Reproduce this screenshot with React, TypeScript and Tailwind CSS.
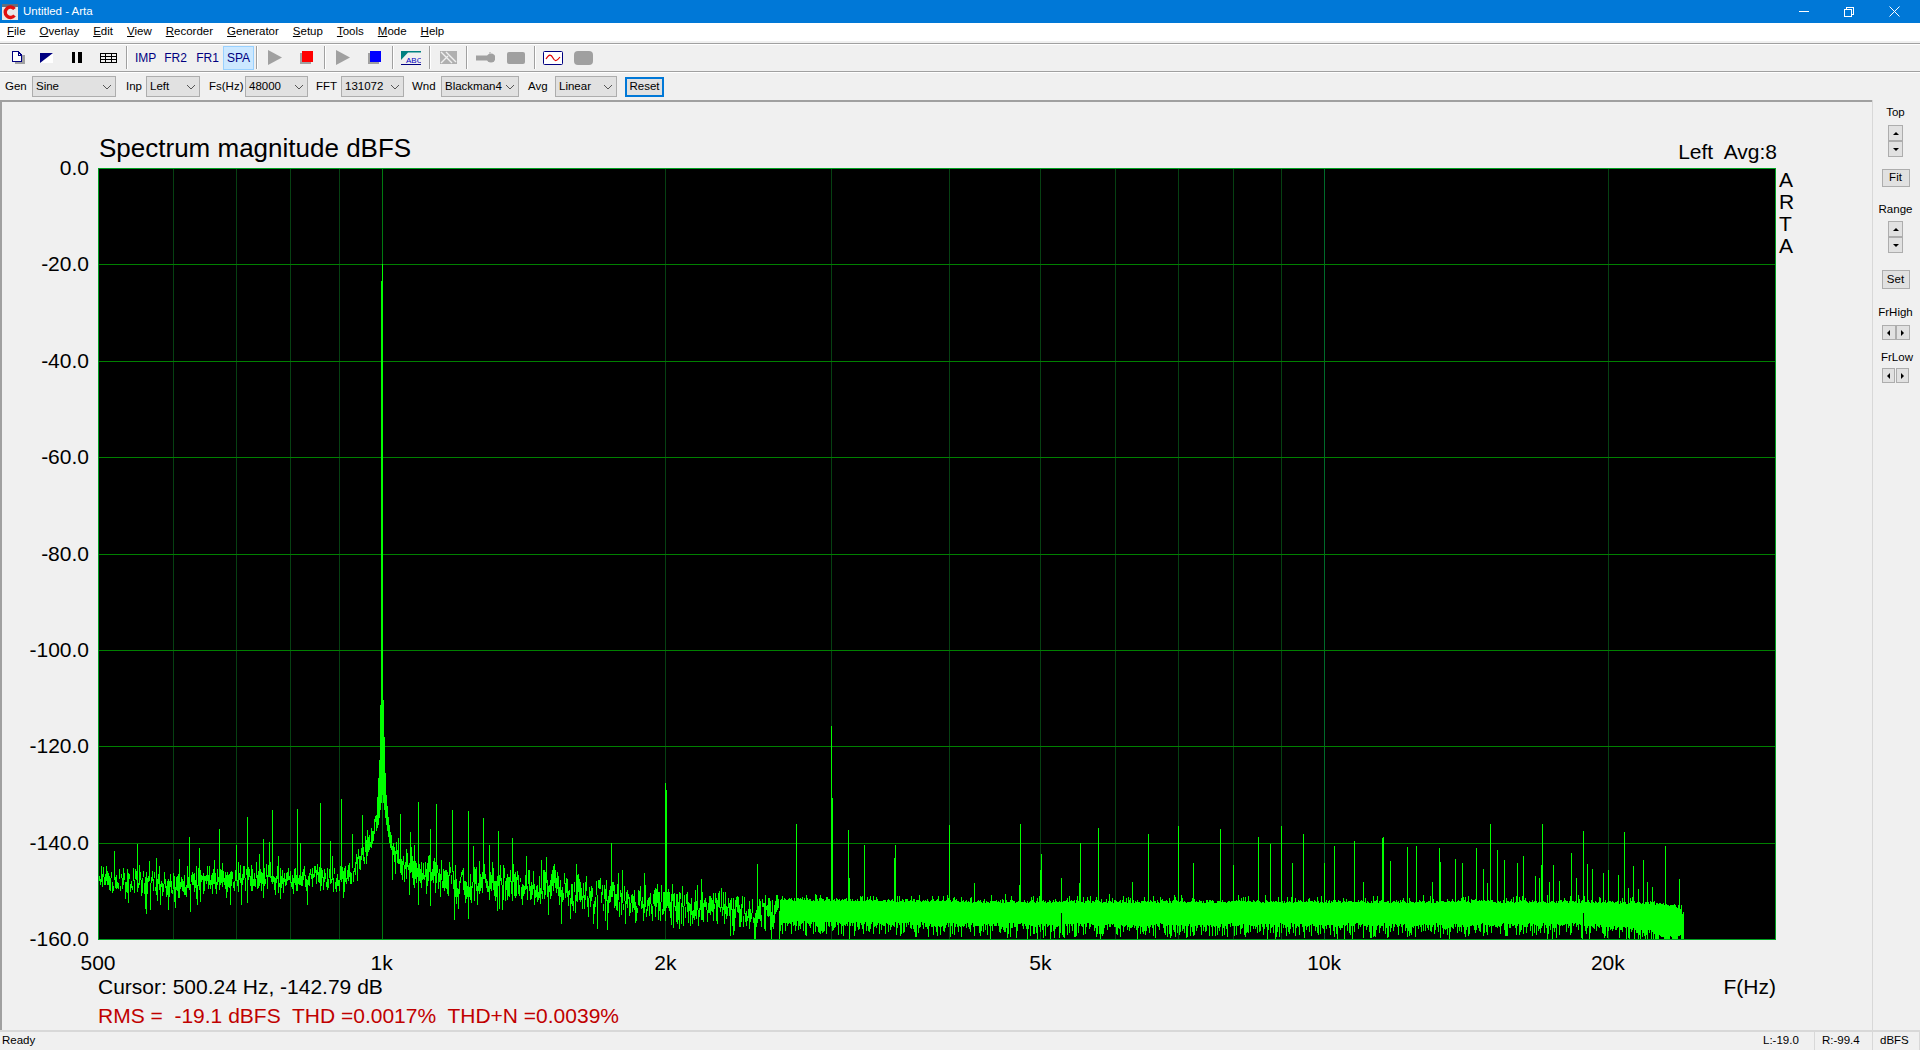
import type { ReactNode } from "react"

const UI = "font-[Liberation_Sans,Arial,sans-serif] text-[11.5px] text-black"
const PLOT = "font-[Liberation_Sans,Arial,sans-serif] text-[21px] leading-[24px] text-black"

const MENU = ["File", "Overlay", "Edit", "View", "Recorder", "Generator", "Setup", "Tools", "Mode", "Help"]
const DB_LABELS = ["0.0", "-20.0", "-40.0", "-60.0", "-80.0", "-100.0", "-120.0", "-140.0", "-160.0"]

// plot geometry in page pixels
const LEFT = 98
const RIGHT = 1775
const TOP = 168
const BOTTOM = 939
const OCTAVE = 283.7
const xOf = (f: number) => LEFT + OCTAVE * Math.log2(f / 500)

const MINOR = [600, 700, 800, 900, 2000, 3000, 4000, 5000, 6000, 7000, 8000, 9000, 20000]
const X_LABELS: [number, string][] = [
  [500, "500"],
  [1000, "1k"],
  [2000, "2k"],
  [5000, "5k"],
  [10000, "10k"],
  [20000, "20k"],
]

// upper and lower edge of the noise band, [x, y]
const TOP_EDGE = [
  [98, 872], [150, 873], [200, 875], [295, 867], [340, 866], [360, 850], [370, 838], [376, 815], [379, 760], [380, 705],
  [381, 281], [382, 264], [383, 700], [384, 737], [385, 773], [386, 795], [388, 817], [390, 832], [395, 843], [400, 857],
  [440, 863], [500, 868], [550, 873], [600, 880], [660, 890], [700, 895], [800, 898], [1000, 900], [1600, 900], [1650, 902],
  [1675, 903], [1684, 913],
]
const BOTTOM_EDGE = [
  [98, 892], [150, 892], [200, 889], [295, 888], [340, 885], [360, 873], [370, 850], [378, 825], [382, 795], [386, 825],
  [392, 860], [400, 875], [440, 890], [500, 895], [550, 905], [600, 912], [660, 918], [700, 922], [800, 926], [1000, 928],
  [1600, 928], [1650, 935], [1665, 939], [1684, 939],
]

// harmonics and mains products sticking out of the noise, [x, y]
const SPIKES = [
  [114, 851], [137, 844], [156, 858], [179, 859], [189, 837], [199, 848], [219, 829], [236, 845], [247, 817], [259, 854],
  [263, 839], [269, 842], [272, 810], [297, 809], [300, 843], [320, 803], [330, 841], [341, 799], [352, 834], [362, 815],
  [367, 830], [400, 814], [410, 832], [418, 802], [430, 829], [436, 804], [452, 810], [468, 811], [473, 846], [483, 818],
  [489, 845], [498, 831], [512, 838], [526, 856], [541, 860], [576, 864], [611, 843], [622, 870], [644, 873], [665, 783],
  [666, 790], [757, 864], [796, 824], [831, 726], [832, 798], [848, 830], [849, 878], [864, 845], [895, 845], [894, 858],
  [949, 825], [974, 883], [1019, 885], [1020, 824], [1040, 870], [1041, 854], [1061, 878], [1080, 843], [1079, 883],
  [1098, 828], [1132, 882], [1148, 834], [1178, 826], [1193, 863], [1220, 829], [1233, 865], [1258, 837], [1270, 844],
  [1281, 826], [1292, 863], [1303, 834], [1324, 863], [1334, 846], [1354, 841], [1363, 882], [1382, 838], [1383, 837],
  [1390, 861], [1407, 847], [1416, 846], [1432, 882], [1439, 848], [1440, 862], [1455, 859], [1462, 863], [1476, 848],
  [1483, 869], [1487, 883], [1490, 824], [1497, 850], [1504, 860], [1517, 863], [1523, 856], [1535, 876], [1539, 878],
  [1541, 865], [1542, 824], [1549, 882], [1553, 865], [1559, 881], [1571, 853], [1576, 878], [1583, 831], [1587, 864],
  [1592, 869], [1603, 873], [1608, 870], [1618, 875], [1624, 832], [1628, 888], [1633, 866], [1638, 889], [1643, 860],
  [1647, 882], [1652, 887], [1665, 846], [1679, 879],
]

function edge(table: number[][], x: number) {
  for (let i = 1; i < table.length; i++) {
    if (x <= table[i][0]) {
      const [x0, y0] = table[i - 1]
      const [x1, y1] = table[i]
      return y0 + ((y1 - y0) * (x - x0)) / (x1 - x0)
    }
  }
  return table[table.length - 1][1]
}

function buildTrace() {
  let seed = 4711
  const rnd = () => {
    seed = (seed + 0x6d2b79f5) | 0
    let t = Math.imul(seed ^ (seed >>> 15), 1 | seed)
    t = (t + Math.imul(t ^ (t >>> 7), 61 | t)) ^ t
    return ((t ^ (t >>> 14)) >>> 0) / 4294967296
  }
  const spikes = new Map(SPIKES.map(([x, y]) => [x, y]))
  let d = ""
  for (let x = LEFT; x <= 1683; x++) {
    let top = edge(TOP_EDGE, x)
    let bot = edge(BOTTOM_EDGE, x)
    const onPeak = x >= 376 && x <= 390
    if (!onPeak) {
      const span = bot - top
      if (x < 780) {
        // few FFT bins per pixel down here, so the trace wanders column by column
        const wander = 4 * Math.sin(x / 23) + 3 * Math.sin(x / 9.1 + 1)
        const mid = (top + bot) / 2 + wander * 0.6 + (rnd() - 0.5) * span * 0.8
        const half = 2 + rnd() * (x < 400 ? 6 : 9)
        top = mid - half
        bot = mid + half
        if (rnd() < 0.15) top -= 2 + rnd() * 9
        if (rnd() < 0.2) bot += 3 + rnd() * 17
      } else {
        top += rnd() * 3
        if (rnd() < 0.2) top -= rnd() * 6
        bot -= rnd() * 5
        if (rnd() < 0.6) bot += rnd() * 13
      }
    }
    if (x === 1061 || x === 1583) bot = 913
    const spike = spikes.get(x)
    if (spike !== undefined) top = Math.min(top, spike)
    bot = Math.min(bot, BOTTOM)
    d += `M${x + 0.5} ${Math.round(top)}V${Math.round(bot)}`
  }
  return d
}

function Spectrum() {
  return (
    <svg width={RIGHT - LEFT + 1} height={BOTTOM - TOP + 1} viewBox={`${LEFT} ${TOP} ${RIGHT - LEFT + 1} ${BOTTOM - TOP + 1}`} shapeRendering="crispEdges" className="block shrink-0">
      <rect x={LEFT} y={TOP} width={RIGHT - LEFT + 1} height={BOTTOM - TOP + 1} fill="#000" />
      {MINOR.map((f) => (
        <line key={f} x1={Math.round(xOf(f)) + 0.5} x2={Math.round(xOf(f)) + 0.5} y1={TOP} y2={BOTTOM} stroke="#064012" />
      ))}
      <line x1={382.5} x2={382.5} y1={TOP} y2={BOTTOM} stroke="#007a10" />
      <line x1={1324.5} x2={1324.5} y1={TOP} y2={BOTTOM} stroke="#006a2a" />
      {DB_LABELS.map((_, i) => {
        const y = Math.round(TOP + (i * (BOTTOM - TOP)) / 8) + 0.5
        return <line key={i} x1={LEFT} x2={RIGHT} y1={y} y2={y} stroke="#008000" />
      })}
      <path d={buildTrace()} stroke="#00ff00" strokeWidth={1} fill="none" />
      <rect x={LEFT + 0.5} y={TOP + 0.5} width={RIGHT - LEFT} height={BOTTOM - TOP} fill="none" stroke="#00a020" />
    </svg>
  )
}

function Chevron() {
  return (
    <svg width="10" height="6" viewBox="0 0 10 6" className="shrink-0">
      <path d="M1 1l4 4 4-4" fill="none" stroke="#555" strokeWidth="1" />
    </svg>
  )
}

function Combo({ value, width }: { value: string; width: string }) {
  return (
    <div className={`${width} flex h-[21px] shrink-0 items-center justify-between border border-[#adadad] bg-[#e1e1e1] pl-[3px] pr-[3px]`}>
      <span>{value}</span>
      <Chevron />
    </div>
  )
}

function Separator({ className }: { className: string }) {
  return <div className={`${className} h-[23px] w-[2px] shrink-0 border-l border-[#a0a0a0] bg-white`} />
}

function TextTool({ label, className }: { label: string; className: string }) {
  return <span className={`${className} shrink-0 text-center text-[12px] text-[#000080]`}>{label}</span>
}

function Arrow({ dir }: { dir: "up" | "down" | "left" | "right" }) {
  const points = {
    up: "0,4 6,4 3,1",
    down: "0,1 6,1 3,4",
    left: "4,0 4,6 1,3",
    right: "1,0 1,6 4,3",
  }[dir]
  const vertical = dir === "up" || dir === "down"
  return (
    <svg width={vertical ? 6 : 5} height={vertical ? 5 : 6} viewBox={vertical ? "0 0 6 5" : "0 0 5 6"}>
      <polygon points={points} fill="#000" />
    </svg>
  )
}

function ArrowButton({ dir, className }: { dir: "up" | "down" | "left" | "right"; className: string }) {
  return (
    <div className={`${className} flex items-center justify-center border border-[#adadad] bg-[#e1e1e1]`}>
      <Arrow dir={dir} />
    </div>
  )
}

function SideButton({ children, className }: { children: ReactNode; className: string }) {
  return <div className={`${className} flex w-[28px] items-center justify-center border border-[#adadad] bg-[#e1e1e1]`}>{children}</div>
}

function Toolbar() {
  return (
    <div className="flex h-[28px] items-center border-t border-[#a0a0a0] pl-[11px] shadow-[inset_0_1px_0_#fff]">
      {/* document */}
      <svg width="14" height="13" viewBox="0 0 14 13" shapeRendering="crispEdges" className="shrink-0">
        <rect x="4" y="4" width="10" height="9" fill="#a0a0a0" />
        <path d="M1.5.5H7L10.5 4V10.5H1.5Z" fill="#fff" stroke="#000080" />
        <path d="M7 .5V4H10.5" fill="none" stroke="#000080" />
      </svg>
      {/* overlay flag */}
      <svg width="13" height="10" viewBox="0 0 13 10" className="ml-[15px] shrink-0">
        <rect width="13" height="10" fill="#fff" />
        <path d="M0 0H13L0 10Z" fill="#000080" />
      </svg>
      {/* pause */}
      <svg width="10" height="11" viewBox="0 0 10 11" shapeRendering="crispEdges" className="ml-[19px] shrink-0">
        <rect width="3" height="11" fill="#000" />
        <rect x="6" width="4" height="11" fill="#000" />
      </svg>
      {/* table */}
      <svg width="17" height="10" viewBox="0 0 17 10" shapeRendering="crispEdges" className="ml-[18px] shrink-0">
        <path d="M.5.5H16.5V9.5H.5ZM.5 3.5H16.5M.5 6.5H16.5M5.5.5V9.5M11.5.5V9.5" fill="none" stroke="#000" />
      </svg>
      <Separator className="ml-[9px]" />
      <TextTool label="IMP" className="ml-[7px] w-[20px]" />
      <TextTool label="FR2" className="ml-[9px] w-[23px]" />
      <TextTool label="FR1" className="ml-[9px] w-[23px]" />
      <div className="ml-[4px] flex h-[24px] w-[31px] shrink-0 items-center justify-center border border-[#99d1ff] bg-[#cce8ff]">
        <TextTool label="SPA" className="" />
      </div>
      <Separator className="ml-[2px]" />
      <svg width="14" height="15" viewBox="0 0 14 15" className="ml-[10px] shrink-0">
        <polygon points="0,0 14,7.5 0,15" fill="#a0a0a0" />
      </svg>
      <svg width="13" height="13" viewBox="0 0 13 13" shapeRendering="crispEdges" className="ml-[18px] shrink-0">
        <rect y="2" width="11" height="11" fill="#a0a0a0" />
        <rect x="2" width="11" height="11" fill="#ff0000" />
      </svg>
      <Separator className="ml-[11px]" />
      <svg width="14" height="15" viewBox="0 0 14 15" className="ml-[10px] shrink-0">
        <polygon points="0,0 14,7.5 0,15" fill="#a0a0a0" />
      </svg>
      <svg width="13" height="13" viewBox="0 0 13 13" shapeRendering="crispEdges" className="ml-[18px] shrink-0">
        <rect y="2" width="11" height="11" fill="#a0a0a0" />
        <rect x="2" width="11" height="11" fill="#0000ff" />
      </svg>
      <Separator className="ml-[11px]" />
      {/* abc graph */}
      <svg width="20" height="14" viewBox="0 0 20 14" className="ml-[7px] shrink-0">
        <path d="M0 0H20V1.5H7L0 9Z" fill="#008080" />
        <path d="M0 13.5H20" stroke="#000080" strokeWidth="1" />
        <text x="5" y="11.5" fontSize="8" fontFamily="Liberation Sans" fill="#0000c0">ABC</text>
      </svg>
      <Separator className="ml-[8px]" />
      {/* hatched */}
      <svg width="17" height="13" viewBox="0 0 17 13" className="ml-[9px] shrink-0">
        <rect width="17" height="13" fill="#b0b0b0" />
        <path d="M1 1L12 12M6 1L16 11M1 12L8 5" stroke="#f0f0f0" strokeWidth="1.4" />
      </svg>
      <Separator className="ml-[9px]" />
      {/* key */}
      <svg width="19" height="12" viewBox="0 0 19 12" className="ml-[8px] shrink-0">
        <rect y="3.5" width="13" height="5" fill="#a0a0a0" />
        <circle cx="15" cy="6" r="4.5" fill="#a0a0a0" />
        <rect x="13" y="0" width="2" height="2" fill="#c8c8c8" />
      </svg>
      <div className="ml-[12px] h-[12px] w-[18px] shrink-0 rounded-[2px] bg-[#a0a0a0]" />
      <Separator className="ml-[9px]" />
      {/* scope */}
      <svg width="20" height="14" viewBox="0 0 20 14" className="ml-[7px] shrink-0">
        <rect x="0.5" y="0.5" width="19" height="13" rx="1" fill="#fff" stroke="#000080" />
        <path d="M3 8C6 3 8 3 10 7S14 10 17 6" fill="none" stroke="#e00000" strokeWidth="1.2" />
      </svg>
      <div className="ml-[11px] h-[14px] w-[19px] shrink-0 rounded-[4px] bg-[#a0a0a0]" />
    </div>
  )
}

function OptionsBar() {
  return (
    <div className="flex h-[29px] items-center border-t border-[#a0a0a0] pl-[5px] pt-[1px] shadow-[inset_0_1px_0_#fff]">
      <span className="w-[27px] shrink-0">Gen</span>
      <Combo value="Sine" width="w-[84px]" />
      <span className="ml-[10px] w-[20px] shrink-0">Inp</span>
      <Combo value="Left" width="w-[54px]" />
      <span className="ml-[9px] w-[36px] shrink-0">Fs(Hz)</span>
      <Combo value="48000" width="w-[63px]" />
      <span className="ml-[8px] w-[25px] shrink-0">FFT</span>
      <Combo value="131072" width="w-[63px]" />
      <span className="ml-[8px] w-[29px] shrink-0">Wnd</span>
      <Combo value="Blackman4" width="w-[78px]" />
      <span className="ml-[9px] w-[27px] shrink-0">Avg</span>
      <Combo value="Linear" width="w-[62px]" />
      <div className="ml-[8px] flex h-[20px] w-[39px] shrink-0 items-center justify-center border-2 border-[#0078d7] bg-[#e1e1e1]">Reset</div>
    </div>
  )
}

function SidePanel() {
  return (
    <div className="flex w-[48px] shrink-0 flex-col items-center border-l border-[#d8d8d8] pr-[2px]">
      <div className="mt-[4px] h-[16px] leading-[16px]">Top</div>
      <ArrowButton dir="up" className="mt-[5px] h-[16px] w-[15px]" />
      <ArrowButton dir="down" className="h-[16px] w-[15px]" />
      <SideButton className="mt-[12px] h-[18px]">Fit</SideButton>
      <div className="mt-[14px] h-[16px] leading-[16px]">Range</div>
      <ArrowButton dir="up" className="mt-[4px] h-[16px] w-[15px]" />
      <ArrowButton dir="down" className="h-[16px] w-[15px]" />
      <SideButton className="mt-[17px] h-[19px]">Set</SideButton>
      <div className="mt-[15px] h-[16px] leading-[16px]">FrHigh</div>
      <div className="mt-[5px] flex">
        <ArrowButton dir="left" className="h-[15px] w-[14px]" />
        <ArrowButton dir="right" className="h-[15px] w-[14px]" />
      </div>
      <div className="ml-[3px] mt-[9px] h-[16px] leading-[16px]">FrLow</div>
      <div className="mt-[3px] flex gap-px">
        <ArrowButton dir="left" className="h-[15px] w-[13px]" />
        <ArrowButton dir="right" className="h-[15px] w-[13px]" />
      </div>
    </div>
  )
}

function PlotPanel() {
  return (
    <div className={`${PLOT} flex min-w-0 flex-1 flex-col border-l-2 border-t-2 border-[#a0a0a0]`}>
      <div className="flex h-[66px] justify-between pl-[97px] pr-[95px]">
        <span className="pt-[34px] text-[26px]">Spectrum magnitude dBFS</span>
        <span className="whitespace-pre pt-[38px]">Left  Avg:8</span>
      </div>
      <div className="flex h-[772px]">
        <div className="flex w-[96px] shrink-0 flex-col justify-between pb-[1px] pr-[9px]">
          {DB_LABELS.map((label) => (
            <div key={label} className="flex h-0 items-center justify-end">{label}</div>
          ))}
        </div>
        <Spectrum />
        <div className="flex flex-col pl-[3px] pt-[1px] leading-[22px]">
          <span>A</span>
          <span>R</span>
          <span>T</span>
          <span>A</span>
        </div>
      </div>
      <div className="relative h-[35px]">
        {X_LABELS.map(([f, label]) => (
          <span key={label} className="absolute top-[11px] -translate-x-1/2" style={{ left: xOf(f) - 2 }}>
            {label}
          </span>
        ))}
      </div>
      <div className="flex h-[29px] justify-between pl-[96px] pr-[96px]">
        <span>Cursor: 500.24 Hz, -142.79 dB</span>
        <span>F(Hz)</span>
      </div>
      <div className="whitespace-pre pl-[96px] text-[#c00000]">RMS =  -19.1 dBFS  THD =0.0017%  THD+N =0.0039%</div>
    </div>
  )
}

export default function App() {
  return (
    <div className={`${UI} flex h-[1050px] w-[1920px] flex-col overflow-hidden bg-[#f0f0f0]`}>
      {/* Title bar */}
      <div className="flex h-[23px] shrink-0 items-center bg-[#0078d7] pl-[2px] text-white">
        <svg width="16" height="16" viewBox="0 0 16 16" className="shrink-0">
          <rect width="16" height="16" fill="#e8e8e8" />
          <rect width="16" height="3" fill="#607080" />
          <path d="M12.5 5A5.2 5.2 0 1 0 12.5 11.5" fill="none" stroke="#e01010" strokeWidth="3.4" />
        </svg>
        <span className="ml-[5px] text-white">Untitled - Arta</span>
        <div className="ml-auto flex items-center pr-[20px]">
          <div className="h-px w-[10px] bg-white" />
          <svg width="10" height="10" viewBox="0 0 10 10" className="ml-[35px]" shapeRendering="crispEdges">
            <path d="M.5 2.5H7.5V9.5H.5ZM2.5 2.5V.5H9.5V7.5H7.5" fill="none" stroke="#fff" />
          </svg>
          <svg width="11" height="11" viewBox="0 0 11 11" className="ml-[35px]">
            <path d="M.5.5L10.5 10.5M10.5.5L.5 10.5" fill="none" stroke="#fff" />
          </svg>
        </div>
      </div>

      {/* Menu */}
      <div className="flex h-[18px] shrink-0 items-center gap-[14px] bg-white pl-[7px]">
        {MENU.map((item) => (
          <span key={item}>
            <span className="underline">{item[0]}</span>
            {item.slice(1)}
          </span>
        ))}
      </div>
      <div className="h-[2px] shrink-0" />

      <Toolbar />
      <OptionsBar />

      {/* Main area */}
      <div className="flex min-h-0 flex-1">
        <PlotPanel />
        <SidePanel />
      </div>

      {/* Status bar */}
      <div className="flex h-[20px] shrink-0 items-center border-t-2 border-[#d8d8d8] pl-[2px]">
        <span>Ready</span>
        <span className="ml-auto w-[51px] shrink-0">L:-19.0</span>
        <span className="flex h-full w-[58px] shrink-0 items-center border-l border-[#d8d8d8] pl-[7px]">R:-99.4</span>
        <span className="flex h-full w-[48px] shrink-0 items-center border-l border-r border-[#d8d8d8] pl-[7px]">dBFS</span>
      </div>
    </div>
  )
}
